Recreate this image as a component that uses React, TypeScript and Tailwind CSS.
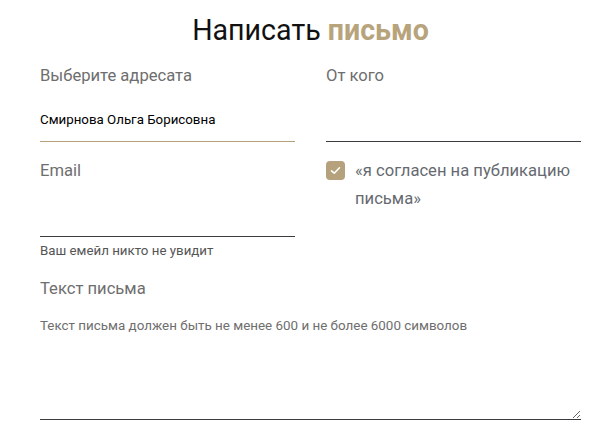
import { useState } from 'react';

const font = { fontFamily: 'Roboto, "Noto Sans", sans-serif' };

function Field({ label, value, focused }: { label: string; value?: string; focused?: boolean }) {
  return (
    <div className="flex flex-col">
      <label className="text-[16.6px] leading-[24px] text-[#6e6e6e]">{label}</label>
      <input
        defaultValue={value}
        className={
          'h-[54px] w-full border-0 border-b bg-transparent pt-[17px] pb-[8px] text-[13.3px] text-black outline-none ' +
          (focused ? 'border-[#b5a27c]' : 'border-[#3b3b3f]')
        }
      />
    </div>
  );
}

export default function App() {
  const [agree, setAgree] = useState(true);

  return (
    <div className="min-h-[432px] bg-white pl-[40px] pr-[18px] pt-3" style={font}>
      <h1 className="text-center text-[28.6px] leading-[36px] text-[#111]">
        Написать <span className="font-bold text-[#b8a47c]">письмо</span>
      </h1>

      <form className="mt-4 grid grid-cols-2 gap-x-[31px]">
        <Field label="Выберите адресата" value="Смирнова Ольга Борисовна" focused />
        <Field label="От кого" />

        <div className="mt-[17px] flex flex-col">
          <Field label="Email" />
          <p className="mt-[6px] text-[13.3px] leading-[16px] text-[#555]">Ваш емейл никто не увидит</p>
        </div>

        <label className="mt-[15px] flex cursor-pointer items-start gap-[10px]">
          <button
            type="button"
            onClick={() => setAgree(!agree)}
            className={
              'mt-[4px] flex h-[19px] w-[19px] shrink-0 items-center justify-center rounded-[4px] ' +
              (agree ? 'bg-[#b5a27c]' : 'border border-[#b5a27c] bg-white')
            }
          >
            {agree && (
              <svg width="11" height="9" viewBox="0 0 11 9" fill="none">
                <path d="M1.5 4.8 4.2 7.2 9.5 1.8" stroke="white" strokeWidth="1.6" strokeLinecap="round" strokeLinejoin="round" />
              </svg>
            )}
          </button>
          <span className="text-[16.6px] leading-[28px] text-[#666a70]">«я согласен на публикацию письма»</span>
        </label>

        <div className="col-span-2 mt-[18px] flex flex-col">
          <label className="text-[16.6px] leading-[24px] text-[#6e6e6e]">Текст письма</label>
          <textarea
            placeholder="Текст письма должен быть не менее 600 и не более 6000 символов"
            className="h-[119px] w-full border-0 border-b border-[#3b3b3f] bg-transparent pt-[15px] text-[13.4px] leading-[20px] text-black outline-none placeholder:text-[#6e6e6e]"
          />
        </div>
      </form>
    </div>
  );
}
